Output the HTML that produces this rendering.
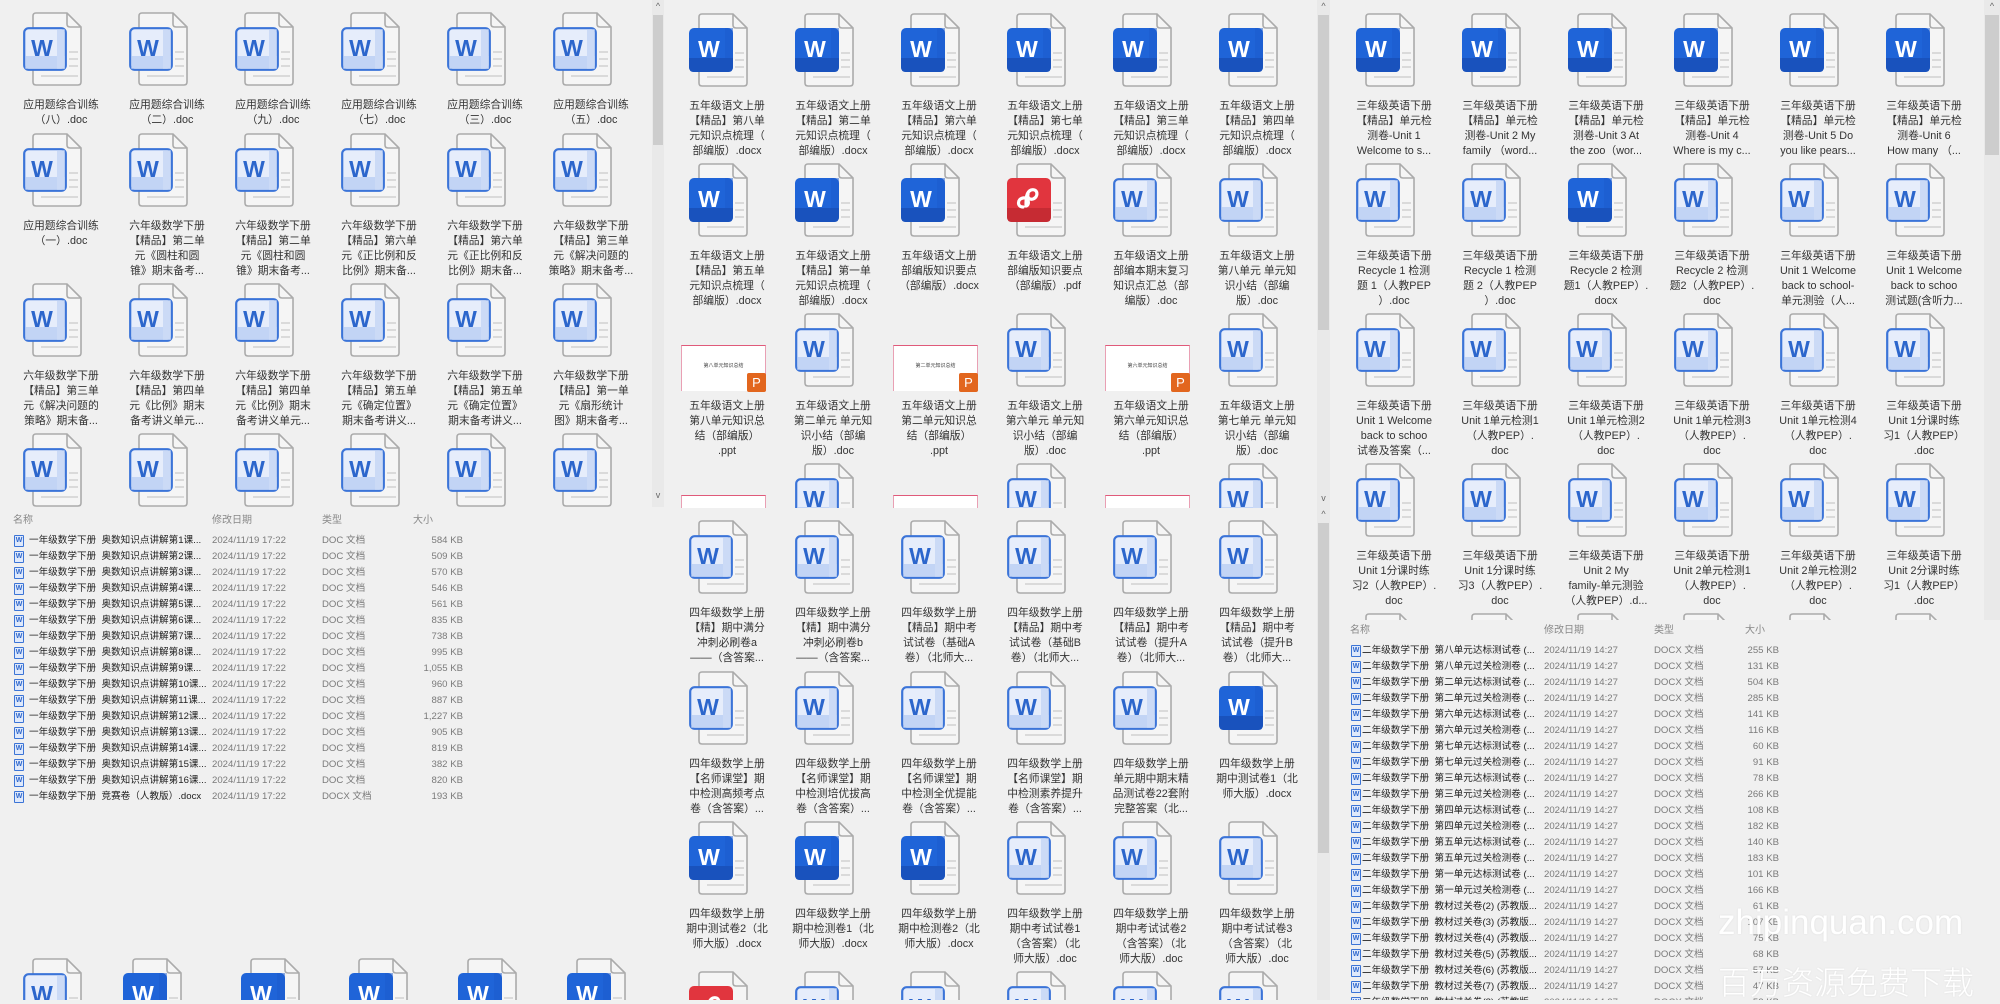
<!DOCTYPE html>
<html><head><meta charset="utf-8">
<style>
*{margin:0;padding:0;box-sizing:border-box}
body{width:2000px;height:1000px;background:#f0f0f0;position:relative;overflow:hidden;font-family:"Liberation Sans","Noto Sans CJK SC",sans-serif;color:#2a2a2a}
.pn{position:absolute;overflow:hidden;background:#f0f0f0}
.it{position:absolute;width:106px}
.it svg{position:absolute;left:15px;top:0}
.lb{position:absolute;left:0;top:86px;width:106px;text-align:center;font-size:10.8px;line-height:15px;white-space:nowrap;color:#333}
.ppt{position:absolute;left:7px;top:32px;width:85px;height:46px;background:#fff;border-top:1.5px solid #e05a7a;border-left:1px solid #e9a0b4;border-right:1px solid #e9a0b4}
.ppt span{position:absolute;left:0;right:0;top:16px;text-align:center;font-size:5px;color:#444}
.ppt b{position:absolute;right:-1px;bottom:-1px;width:19px;height:19px;background:#e2661e;color:#fff;font-size:13px;line-height:19px;text-align:center;border-radius:2px;font-weight:normal}
.sb{position:absolute;background:#e9e9e9}
.th{position:absolute;left:1px;right:1px;background:#cdcdcd}
.ar{position:absolute;left:0;right:0;text-align:center;font-size:9px;color:#666}
.row{position:absolute;font-size:9.6px;line-height:14px;white-space:nowrap}
.row .n{position:absolute;color:#222;overflow:hidden}
.row .d,.row .t,.row .s{position:absolute;color:#7a7a7a}
.row .s{text-align:right}
.mi{position:absolute;width:10px;height:12px;border:1px solid #3b74d6;background:#dfe9fb;border-radius:1px;font-size:7px;line-height:10px;text-align:center;color:#2d66cc;font-weight:bold}
.hd{position:absolute;font-size:10px;color:#888}
.wm{position:absolute;color:#fff;white-space:nowrap;text-shadow:0 0 2px rgba(0,0,0,.08)}
</style></head><body>

<div class="pn" id="LT" style="left:0;top:0;width:652px;height:507px"></div>
<div class="pn" id="LL" style="left:0;top:507px;width:660px;height:493px"></div>
<div class="sb" style="left:652px;top:0;width:12px;height:507px"><div class="ar" style="top:1px">^</div><div class="th" style="top:15px;height:130px"></div><div class="ar" style="top:490px">v</div></div>
<div class="pn" id="MT" style="left:664px;top:0;width:653px;height:508px"></div>
<div class="pn" id="ML" style="left:664px;top:508px;width:653px;height:492px"></div>
<div class="sb" style="left:1317px;top:0;width:13px;height:508px"><div class="ar" style="top:1px">^</div><div class="th" style="top:15px;height:315px"></div><div class="ar" style="top:493px">v</div></div>
<div class="sb" style="left:1317px;top:508px;width:13px;height:492px"><div class="ar" style="top:1px">^</div><div class="th" style="top:15px;height:330px"></div></div>
<div class="pn" id="RT" style="left:1330px;top:0;width:654px;height:620px"></div>
<div class="sb" style="left:1984px;top:0;width:16px;height:620px"><div class="ar" style="top:1px">^</div><div class="th" style="top:15px;height:140px"></div></div>
<div class="pn" id="RL" style="left:1330px;top:620px;width:670px;height:380px"></div>

<div class="wm" style="left:1718px;top:903px;font-size:35px">zhipinquan.com</div>
<div class="wm" style="left:1718px;top:958px;font-size:32px;font-family:'Noto Sans CJK SC',sans-serif;font-weight:300">百万资源免费下载</div>

<script>
function fileSvg(k){
var s='<svg width="70" height="76" viewBox="0 0 70 76">';
s+='<path d="M13 1H44L58 15V70Q58 73 55 73H13Q10 73 10 70V4Q10 1 13 1Z" fill="#f5f5f5" stroke="#ababab" stroke-width="1.6"/>';
s+='<path d="M44 1V12Q44 15 47 15H58" fill="none" stroke="#ababab" stroke-width="1.6"/>';
s+='<g fill="#dadada"><rect x="46" y="39" width="9" height="2"/><rect x="46" y="46" width="9" height="2"/><rect x="46" y="53" width="9" height="2"/><rect x="18" y="63" width="37" height="2"/></g>';
if(k=='s'){
s+='<rect x="0" y="15" width="44" height="44" rx="5" fill="#1f64d8"/><path d="M0 45H44V54Q44 59 39 59H5Q0 59 0 54Z" fill="#1952bd"/><rect x="36" y="15" width="8" height="30" fill="#1b5acb" opacity=".5"/>';
s+='<text x="20" y="44" font-family="Liberation Sans" font-weight="bold" font-size="23" fill="#fff" text-anchor="middle">W</text>';
}else if(k=='p'){
s+='<rect x="0" y="15" width="44" height="44" rx="5" fill="#e1353e"/><path d="M0 45H44V54Q44 59 39 59H5Q0 59 0 54Z" fill="#c62b33"/>';
s+='<path d="M16 44C10 44 10 36 16 35C22 34 23 42 19 43M19 43C19 36 19 29 24 27C31 25 32 34 26 36C22 37 20 34 21 31" fill="none" stroke="#fff" stroke-width="3.2" stroke-linecap="round"/>';
}else{
s+='<rect x="1.2" y="16.2" width="41.6" height="41.6" rx="4.5" fill="#e6edfb" stroke="#3b74d8" stroke-width="2.2"/><rect x="2.3" y="44" width="39.4" height="12.7" fill="#c2d4f5"/><rect x="34" y="17.3" width="7.7" height="39.4" fill="#cbdaf6"/>';
s+='<text x="19" y="44" font-family="Liberation Sans" font-weight="bold" font-size="23" fill="#2c66cc" text-anchor="middle">W</text>';
}
return s+'</svg>';}
function item(par,x,y,k,lab,wl){
var d=document.createElement('div');d.className='it';d.style.left=x+'px';d.style.top=y+'px';
if(k=='ppt'){d.innerHTML='<div class="ppt"><span>'+(wl||'第八单元知识总结')+'</span><b>P</b></div>';}
else d.innerHTML=fileSvg(k);
if(lab){var l=document.createElement('div');l.className='lb';l.innerHTML=lab.split('|').join('<br>');d.appendChild(l);}
document.getElementById(par).appendChild(d);}
function grid(par,ox,rows){rows.forEach(function(r){r[1].forEach(function(c,i){item(par,ox+i*106,r[0],c[0],c[1],c[2]);});});}

var yy='应用题综合训练';
grid('LT',8,[
[12,[['l',yy+'|（八）.doc'],['l',yy+'|（二）.doc'],['l',yy+'|（九）.doc'],['l',yy+'|（七）.doc'],['l',yy+'|（三）.doc'],['l',yy+'|（五）.doc']]],
[133,[['l',yy+'|（一）.doc'],['l','六年级数学下册|【精品】第二单|元《圆柱和圆|锥》期末备考...'],['l','六年级数学下册|【精品】第二单|元《圆柱和圆|锥》期末备考...'],['l','六年级数学下册|【精品】第六单|元《正比例和反|比例》期末备...'],['l','六年级数学下册|【精品】第六单|元《正比例和反|比例》期末备...'],['l','六年级数学下册|【精品】第三单|元《解决问题的|策略》期末备考...']]],
[283,[['l','六年级数学下册|【精品】第三单|元《解决问题的|策略》期末备...'],['l','六年级数学下册|【精品】第四单|元《比例》期末|备考讲义单元...'],['l','六年级数学下册|【精品】第四单|元《比例》期末|备考讲义单元...'],['l','六年级数学下册|【精品】第五单|元《确定位置》|期末备考讲义...'],['l','六年级数学下册|【精品】第五单|元《确定位置》|期末备考讲义...'],['l','六年级数学下册|【精品】第一单|元《扇形统计|图》期末备考...']]],
[433,[['l',''],['l',''],['l',''],['l',''],['l',''],['l','']]]
]);
var wy='五年级语文上册|';
grid('MT',10,[
[13,[['s',wy+'【精品】第八单|元知识点梳理（|部编版）.docx'],['s',wy+'【精品】第二单|元知识点梳理（|部编版）.docx'],['s',wy+'【精品】第六单|元知识点梳理（|部编版）.docx'],['s',wy+'【精品】第七单|元知识点梳理（|部编版）.docx'],['s',wy+'【精品】第三单|元知识点梳理（|部编版）.docx'],['s',wy+'【精品】第四单|元知识点梳理（|部编版）.docx']]],
[163,[['s',wy+'【精品】第五单|元知识点梳理（|部编版）.docx'],['s',wy+'【精品】第一单|元知识点梳理（|部编版）.docx'],['s',wy+'部编版知识要点|（部编版）.docx'],['p',wy+'部编版知识要点|（部编版）.pdf'],['l',wy+'部编本期末复习|知识点汇总（部|编版）.doc'],['l',wy+'第八单元 单元知|识小结（部编|版）.doc']]],
[313,[['ppt',wy+'第八单元知识总|结（部编版）|.ppt','第八单元知识总结'],['l',wy+'第二单元 单元知|识小结（部编|版）.doc'],['ppt',wy+'第二单元知识总|结（部编版）|.ppt','第二单元知识总结'],['l',wy+'第六单元 单元知|识小结（部编|版）.doc'],['ppt',wy+'第六单元知识总|结（部编版）|.ppt','第六单元知识总结'],['l',wy+'第七单元 单元知|识小结（部编|版）.doc']]],
[463,[['ppt','',' '],['l',''],['ppt','',' '],['l',''],['ppt','',' '],['l','']]]
]);
var sx='四年级数学上册|';
grid('ML',10,[
[12,[['l',sx+'【精】期中满分|冲刺必刷卷a|——（含答案...'],['l',sx+'【精】期中满分|冲刺必刷卷b|——（含答案...'],['l',sx+'【精品】期中考|试试卷（基础A|卷）（北师大...'],['l',sx+'【精品】期中考|试试卷（基础B|卷）（北师大...'],['l',sx+'【精品】期中考|试试卷（提升A|卷）（北师大...'],['l',sx+'【精品】期中考|试试卷（提升B|卷）（北师大...']]],
[163,[['l',sx+'【名师课堂】期|中检测高频考点|卷（含答案）...'],['l',sx+'【名师课堂】期|中检测培优拔高|卷（含答案）...'],['l',sx+'【名师课堂】期|中检测全优提能|卷（含答案）...'],['l',sx+'【名师课堂】期|中检测素养提升|卷（含答案）...'],['l',sx+'单元期中期末精|品测试卷22套附|完整答案（北...'],['s',sx+'期中测试卷1（北|师大版）.docx']]],
[313,[['s',sx+'期中测试卷2（北|师大版）.docx'],['s',sx+'期中检测卷1（北|师大版）.docx'],['s',sx+'期中检测卷2（北|师大版）.docx'],['l',sx+'期中考试试卷1|（含答案）（北|师大版）.doc'],['l',sx+'期中考试试卷2|（含答案）（北|师大版）.doc'],['l',sx+'期中考试试卷3|（含答案）（北|师大版）.doc']]],
[463,[['p',''],['l',''],['l',''],['l',''],['l',''],['l','']]]
]);
var ey='三年级英语下册|';
grid('RT',11,[
[13,[['s',ey+'【精品】单元检|测卷-Unit 1|Welcome to s...'],['s',ey+'【精品】单元检|测卷-Unit 2 My|family （word...'],['s',ey+'【精品】单元检|测卷-Unit 3 At|the zoo（wor...'],['s',ey+'【精品】单元检|测卷-Unit 4|Where is my c...'],['s',ey+'【精品】单元检|测卷-Unit 5 Do|you like pears...'],['s',ey+'【精品】单元检|测卷-Unit 6|How many （...']]],
[163,[['l',ey+'Recycle 1 检测|题 1（人教PEP|）.doc'],['l',ey+'Recycle 1 检测|题 2（人教PEP|）.doc'],['s',ey+'Recycle 2 检测|题1（人教PEP）.|docx'],['l',ey+'Recycle 2 检测|题2（人教PEP）.|doc'],['l',ey+'Unit 1 Welcome|back to school-|单元测验（人...'],['l',ey+'Unit 1 Welcome|back to schoo|测试题(含听力...']]],
[313,[['l',ey+'Unit 1 Welcome|back to schoo|试卷及答案（...'],['l',ey+'Unit 1单元检测1|（人教PEP）.|doc'],['l',ey+'Unit 1单元检测2|（人教PEP）.|doc'],['l',ey+'Unit 1单元检测3|（人教PEP）.|doc'],['l',ey+'Unit 1单元检测4|（人教PEP）.|doc'],['l',ey+'Unit 1分课时练|习1（人教PEP）|.doc']]],
[463,[['l',ey+'Unit 1分课时练|习2（人教PEP）.|doc'],['l',ey+'Unit 1分课时练|习3（人教PEP）.|doc'],['l',ey+'Unit 2 My|family-单元测验|（人教PEP）.d...'],['l',ey+'Unit 2单元检测1|（人教PEP）.|doc'],['l',ey+'Unit 2单元检测2|（人教PEP）.|doc'],['l',ey+'Unit 2分课时练|习1（人教PEP）|.doc']]],
[613,[['l',''],['l',''],['l',''],['l',''],['l',''],['l','']]]
]);
[[8,'l'],[108,'s'],[226,'s'],[334,'s'],[443,'s'],[552,'s']].forEach(function(a){item('LL',a[0],451,a[1],'');});

function list(par,hy,ry,cols,hdr,rows,dateTxt,typeTxt,nw){
var P=document.getElementById(par),h='';
h+='<div class="hd" style="left:'+cols[0]+'px;top:'+(hy-7)+'px">名称</div><div class="hd" style="left:'+cols[2]+'px;top:'+(hy-7)+'px">修改日期</div><div class="hd" style="left:'+cols[3]+'px;top:'+(hy-7)+'px">类型</div><div class="hd" style="left:'+cols[5]+'px;top:'+(hy-7)+'px">大小</div>';
h+='<div class="hd" style="left:'+hdr+'px;top:'+(hy-16)+'px;font-size:9px">^</div>';
rows.forEach(function(r,i){var y=ry+i*16-7;
h+='<div class="row" style="left:0;top:'+y+'px;width:700px"><div class="mi" style="left:'+(cols[0]+1)+'px;top:1px">W</div><div class="n" style="left:'+cols[1]+'px;width:'+nw+'px">'+r[0]+'</div><div class="d" style="left:'+cols[2]+'px">'+dateTxt+'</div><div class="t" style="left:'+cols[3]+'px">'+(r[2]||typeTxt)+'</div><div class="s" style="left:'+(cols[4]-80)+'px;width:80px">'+r[1]+'</div></div>';});
P.insertAdjacentHTML('beforeend',h);}
var L=[],sz=['584','509','570','546','561','835','738','995','1,055','960','887','1,227','905','819','382','820'];
for(var i=0;i<16;i++)L.push(['一年级数学下册&nbsp; 奥数知识点讲解第'+(i+1)+'课...',sz[i]+' KB']);
L.push(['一年级数学下册&nbsp; 竞赛卷（人教版）.docx','193 KB','DOCX 文档']);
list('LL',11,34,[13,29,212,322,463,413],105,L,'2024/11/19 17:22','DOC 文档',180);
var R=[],un=['八','八','二','二','六','六','七','七','三','三','四','四','五','五','一','一'],rs=['255','131','504','285','141','116','60','91','78','266','108','182','140','183','101','166','61','107','75','68','57','47','52'];
for(var i=0;i<16;i++)R.push(['二年级数学下册&nbsp; 第'+un[i]+'单元'+(i%2?'过关检测卷':'达标测试卷')+' (...',rs[i]+' KB']);
for(var j=2;j<=8;j++)R.push(['二年级数学下册&nbsp; 教材过关卷('+j+') (苏教版...',rs[14+j]+' KB']);
list('RL',8,31,[20,32,214,324,449,415],150,R,'2024/11/19 14:27','DOCX 文档',178);
</script>
</body></html>
